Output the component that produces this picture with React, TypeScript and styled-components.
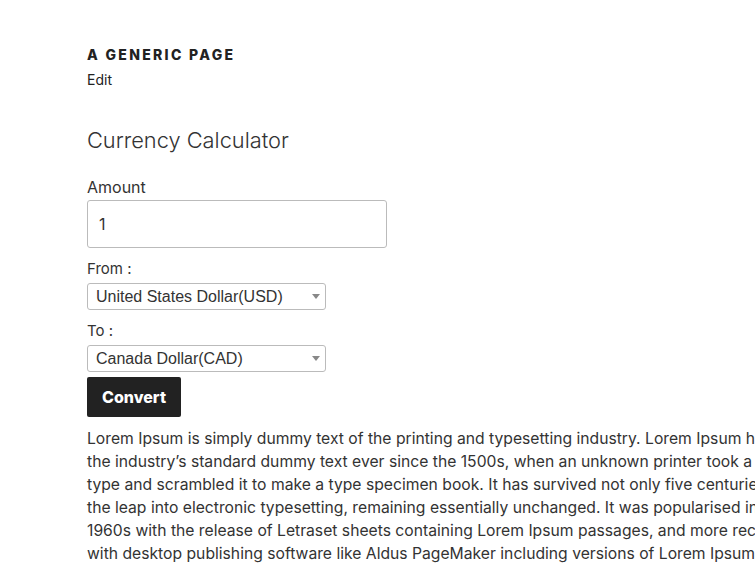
import React, { useState } from 'react';
import styled, { createGlobalStyle } from 'styled-components';

const GlobalStyle = createGlobalStyle`
  html, body {
    margin: 0;
    padding: 0;
    background: #fff;
    overflow: hidden;
  }
  body {
    font-family: 'Inter', 'Liberation Sans', sans-serif;
    color: #333;
  }
`;

const currencies = [
  { code: 'USD', name: 'United States Dollar' },
  { code: 'CAD', name: 'Canada Dollar' },
  { code: 'EUR', name: 'Euro' },
  { code: 'GBP', name: 'United Kingdom Pound' },
];

const loremLines = [
  'Lorem Ipsum is simply dummy text of the printing and typesetting industry. Lorem Ipsum has been',
  'the industry’s standard dummy text ever since the 1500s, when an unknown printer took a galley of',
  'type and scrambled it to make a type specimen book. It has survived not only five centuries, but also',
  'the leap into electronic typesetting, remaining essentially unchanged. It was popularised in the',
  '1960s with the release of Letraset sheets containing Lorem Ipsum passages, and more recently',
  'with desktop publishing software like Aldus PageMaker including versions of Lorem Ipsum.',
];

const CurrencySelect = ({
  value,
  onChange,
}: {
  value: string;
  onChange: (v: string) => void;
}) => (
  <S.SelectWrap>
    <S.Select value={value} onChange={(e) => onChange(e.target.value)}>
      {currencies.map((c) => (
        <option key={c.code} value={c.code}>
          {c.name}({c.code})
        </option>
      ))}
    </S.Select>
    <S.Arrow width="8" height="5" viewBox="0 0 8 5">
      <path d="M0 0h8L4 5z" fill="#888" />
    </S.Arrow>
  </S.SelectWrap>
);

const App = () => {
  const [amount, setAmount] = useState('1');
  const [from, setFrom] = useState('USD');
  const [to, setTo] = useState('CAD');

  return (
    <>
      <GlobalStyle />
      <S.Page>
        <S.Header>
          <S.PageTitle>A Generic Page</S.PageTitle>
          <S.EditLink href="#">Edit</S.EditLink>
        </S.Header>
        <S.Content>
          <S.Heading>Currency Calculator</S.Heading>
          <S.Form onSubmit={(e) => e.preventDefault()}>
            <S.Label>Amount</S.Label>
            <S.Input value={amount} onChange={(e) => setAmount(e.target.value)} />
            <S.SmallLabel>From :</S.SmallLabel>
            <CurrencySelect value={from} onChange={setFrom} />
            <S.SmallLabel>To :</S.SmallLabel>
            <CurrencySelect value={to} onChange={setTo} />
            <S.Button type="submit">Convert</S.Button>
          </S.Form>
          <S.Text>
            {loremLines.map((line) => (
              <S.Line key={line}>{line}</S.Line>
            ))}
          </S.Text>
        </S.Content>
      </S.Page>
    </>
  );
};

const S = {
  Page: styled.div`
    width: 900px;
    padding: 46px 0 0 87px;
  `,
  Header: styled.header`
    display: flex;
    flex-direction: column;
    gap: 6px;
  `,
  PageTitle: styled.h1`
    margin: 0;
    font-size: 14px;
    line-height: 18px;
    font-weight: 800;
    letter-spacing: 0.165em;
    text-transform: uppercase;
    color: #222;
  `,
  EditLink: styled.a`
    font-size: 14px;
    line-height: 20px;
    color: #222;
    text-decoration: none;
  `,
  Content: styled.div`
    margin-top: 35px;
  `,
  Heading: styled.h2`
    margin: 0;
    font-size: 21.8px;
    line-height: 30px;
    font-weight: 300;
    color: #333;
  `,
  Form: styled.form`
    margin-top: 20px;
    display: flex;
    flex-direction: column;
    align-items: flex-start;
  `,
  Label: styled.label`
    font-size: 16px;
    line-height: 24px;
    color: #333;
  `,
  SmallLabel: styled.label`
    margin: 10px 0 3px;
    font-size: 15px;
    line-height: 22px;
    color: #333;
  `,
  Input: styled.input`
    box-sizing: border-box;
    width: 300px;
    height: 48px;
    margin-top: 1px;
    padding: 0 11px;
    border: 1px solid #bbb;
    border-radius: 3px;
    font-family: inherit;
    font-size: 16px;
    color: #333;
    outline: none;
  `,
  SelectWrap: styled.div`
    position: relative;
    width: 239px;
    height: 27px;
  `,
  Select: styled.select`
    box-sizing: border-box;
    display: block;
    width: 100%;
    height: 27px;
    padding: 0 20px 0 8px;
    appearance: none;
    background: #fff;
    border: 1px solid #bbb;
    border-radius: 3px;
    font-family: 'Liberation Sans', Arial, sans-serif;
    font-size: 16px;
    color: #333;
  `,
  Arrow: styled.svg`
    position: absolute;
    right: 6px;
    top: 11px;
    pointer-events: none;
  `,
  Button: styled.button`
    margin-top: 5px;
    height: 40px;
    padding: 0 15px;
    border: none;
    border-radius: 2px;
    background: #222;
    color: #fff;
    font-family: inherit;
    font-size: 16px;
    font-weight: 800;
    cursor: pointer;
  `,
  Text: styled.p`
    margin: 10px 0 0;
    font-size: 15.7px;
    line-height: 23px;
    color: #333;
  `,
  Line: styled.span`
    display: block;
    white-space: nowrap;
  `,
};

export default App;
